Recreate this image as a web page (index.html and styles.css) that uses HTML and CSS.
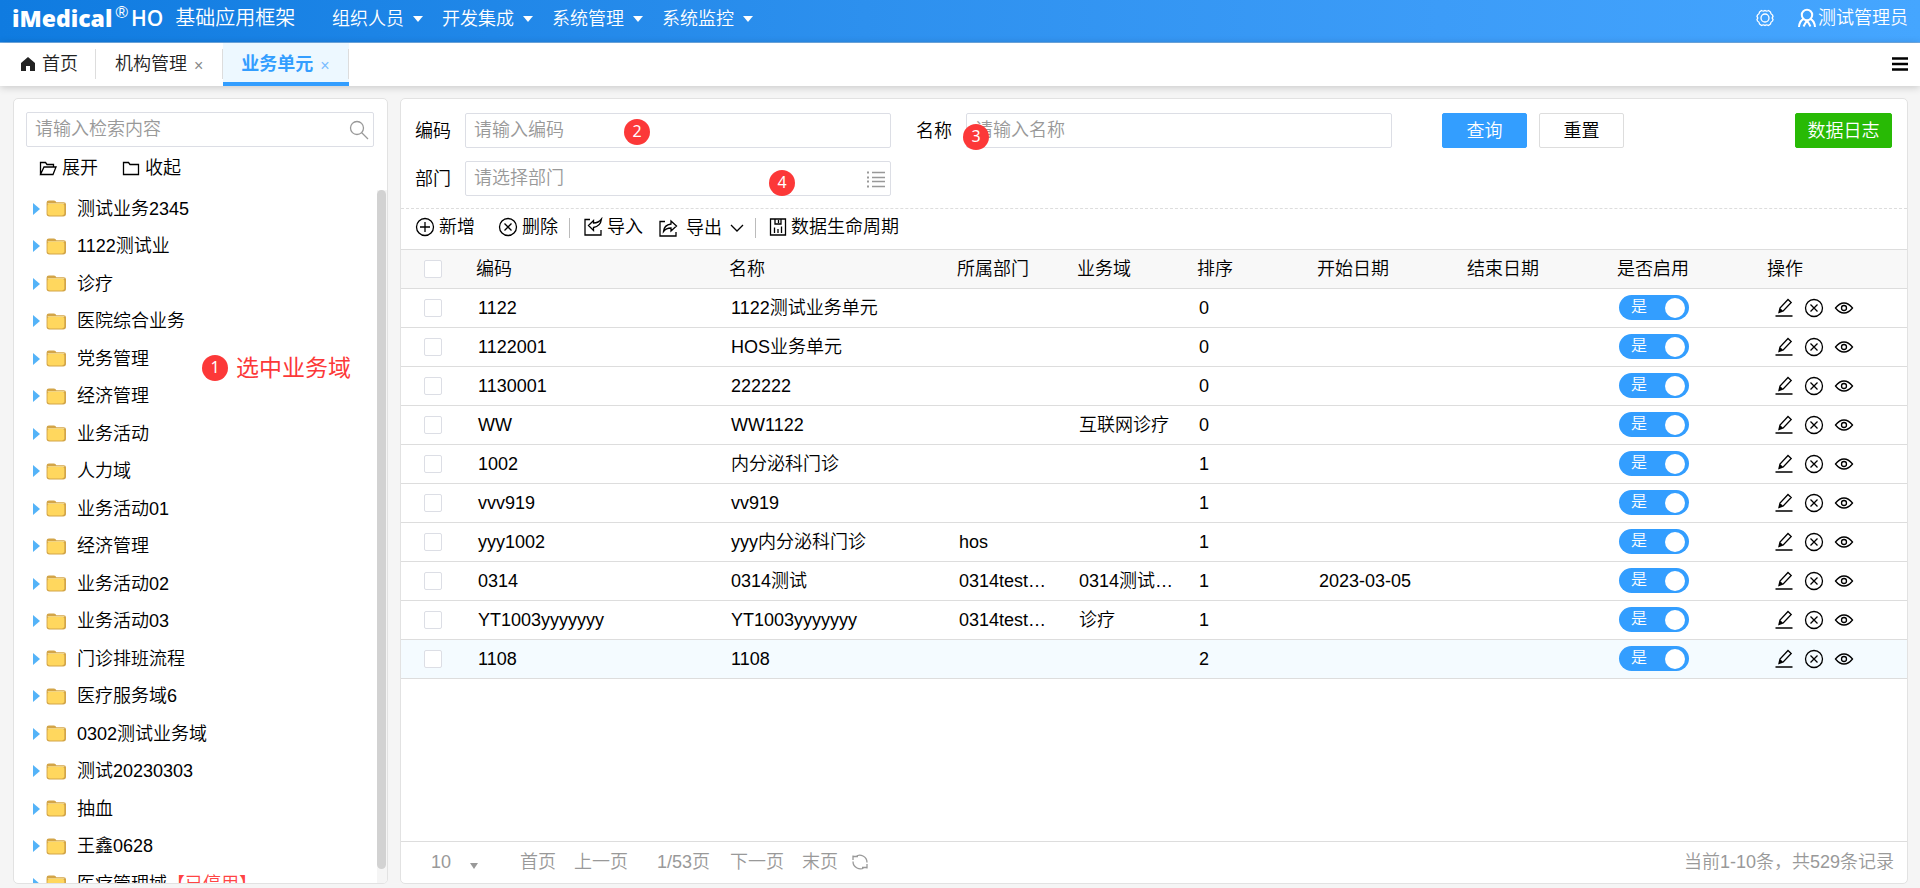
FILE: index.html
```
<!DOCTYPE html>
<html lang="zh-CN">
<head>
<meta charset="utf-8">
<title>iMedical HO 基础应用框架</title>
<link rel="stylesheet" href="styles.css">
</head>
<body>
<svg class="sprite" aria-hidden="true">
  <symbol id="i-folder" viewBox="1.500 1 17.500 16" preserveAspectRatio="none">
    <path d="M2 3.500Q2 1.500 4 1.500h4.500q1.500 0 2 1.500H17q2 0 2 2V14q0 2.500-2.500 2.500h-12Q2 16.500 2 14z" fill="#d3a548"/>
    <path d="M3 3.800h14.500v.8H3z" fill="#f3dfa6"/>
    <rect x="2.800" y="4.500" width="14.700" height="11" rx="2" fill="#ffd75e"/>
  </symbol>
  <symbol id="i-cross" viewBox="0 0 20 20"><circle cx="10" cy="10" r="8.500"/><path d="M6.500 6.500l7 7M13.500 6.500l-7 7"/></symbol>
  <symbol id="i-pen" viewBox="0 0 20 20"><path d="M1.500 18h17M5 14.500l1-4.500 8-8.500 3.200 3-8 8.500zM5.800 10.800l3 2.800M5 14.500l2-2"/></symbol>
  <symbol id="i-eye" viewBox="0 0 20 20"><path d="M1.500 10Q5.500 5 10 5t8.500 5Q14.500 15 10 15t-8.500-5z"/><circle cx="10" cy="10" r="2.500"/></symbol>
</svg>

<header class="topbar">
  <div class="brand"><strong class="brand-name">iMedical</strong><sup class="brand-mark">®</sup><span class="brand-ho">HO</span><span class="brand-title">基础应用框架</span></div>
  <nav class="menu">
    <button type="button">组织人员<i class="caret"></i></button>
    <button type="button">开发集成<i class="caret"></i></button>
    <button type="button">系统管理<i class="caret"></i></button>
    <button type="button">系统监控<i class="caret"></i></button>
  </nav>
  <div class="account">
    <button type="button" aria-label="设置"><svg class="icon i18" viewBox="0 0 18 18"><path d="M5.500 1.500q2 1.300 3.500 0 1.500 1.300 3.500 0l2 1.500q0 2 2 3l.5 1.500q-1.500 1.500 0 3L16.500 12q-2 .8-2 3l-2 1.500q-2-1.300-3.500 0-1.500-1.300-3.500 0l-2-1.500q0-2.200-2-3L1 10.500q1.500-1.500 0-3L1.500 6q2-1 2-3z"/><circle cx="9" cy="9" r="4"/></svg></button>
    <button type="button" class="user"><svg class="icon i20 thick" viewBox="0 0 20 20"><circle cx="10" cy="7" r="5.200"/><path d="M6.500 11q-4 2-4.500 8M13.500 11q4 2 4.500 8M6.500 18.500L9 14h2l2.500 4.500"/></svg>测试管理员</button>
  </div>
</header>

<nav class="tabs">
  <a class="tab home" href="#"><svg class="i14" viewBox="0 0 14 14"><path d="M7 0l7 6v8H9V9H5v5H0V6z" fill="#222"/></svg>首页</a>
  <a class="tab" href="#">机构管理<span class="close">×</span></a>
  <a class="tab active" href="#">业务单元<span class="close">×</span></a>
  <button type="button" class="tabs-menu" aria-label="更多"><svg class="i16" viewBox="0 0 16 14"><path d="M0 1.500h16M0 7h16M0 12.500h16" stroke="#000" stroke-width="2.500"/></svg></button>
</nav>

<main class="workspace">
  <aside class="panel side">
    <label class="search"><input type="text" placeholder="请输入检索内容" aria-label="检索"><svg class="icon i20 gray" viewBox="0 0 20 20"><circle cx="8" cy="8" r="6.500"/><path d="M12.500 12.500L19 19"/></svg></label>
    <div class="tree-tools">
      <button type="button"><svg class="icon i18" viewBox="0 0 18 18"><path d="M1.500 15.500v-12h5l1.500 2h6.500v2.500M1.500 15.500L5 8h12l-3 7.500z"/></svg>展开</button>
      <button type="button"><svg class="icon i18" viewBox="0 0 18 18"><path d="M1.500 15.500v-12h5l1.500 2h8.500v10z"/></svg>收起</button>
    </div>
    <div class="tree-wrap">
      <ul class="tree" id="tree"></ul>
      <div class="scroll"><div class="thumb"></div></div>
    </div>
  </aside>

  <section class="panel content">
    <form class="filters">
      <div class="field code"><label for="f1">编码</label><input id="f1" type="text" placeholder="请输入编码"></div>
      <div class="field name"><label for="f2">名称</label><input id="f2" type="text" placeholder="请输入名称"></div>
      <div class="actions"><button type="button" class="btn primary">查询</button><button type="button" class="btn">重置</button><button type="button" class="btn log">数据日志</button></div>
      <div class="field dept"><label for="f3">部门</label><div class="lookup"><input id="f3" type="text" placeholder="请选择部门"><svg class="icon i20 gray" viewBox="0 0 20 20"><path d="M6 3.500h13M6 8.500h13M6 12.500h13M6 17.500h13"/><path d="M1 3.500h2M1 8.500h2M1 12.500h2M1 17.500h2" stroke-width="2"/></svg></div></div>
    </form>
    <div class="toolbar">
      <button type="button"><svg class="icon i20" viewBox="0 0 20 20"><circle cx="10" cy="10" r="8.500"/><path d="M10 5v10M5 10h10"/></svg>新增</button>
      <button type="button" class="del"><svg class="icon i20"><use href="#i-cross"/></svg>删除</button>
      <i class="sep"></i>
      <button type="button"><svg class="icon i20" viewBox="0 0 20 20"><path d="M7 2.500H2v15.500h16v-5M5.500 8.500l5-5v2.500q5 0 8-4-1 7.500-8 8.500v3z"/></svg>导入</button>
      <button type="button" class="exp"><svg class="icon i20" viewBox="0 0 20 20"><path d="M7 3.500H2v14.500h16v-4M5.500 13.500Q6 7 13 6V3l5.500 5-5.500 5v-3q-5 0-7.500 3.500z"/></svg>导出<svg class="icon i14" viewBox="0 0 14 14"><path d="M1 4l6 6 6-6"/></svg></button>
      <i class="sep"></i>
      <button type="button"><svg class="icon i18" viewBox="0 0 18 18"><path d="M1.500 1h15v16h-15zM6 1v5h6V1M9.500 2v3M5.500 9.500V15M9 11v4M12.500 8.500V15"/></svg>数据生命周期</button>
    </div>
    <div class="grid">
      <table>
        <colgroup><col class="c-check"><col class="c-code"><col class="c-name"><col class="c-dept"><col class="c-dept"><col class="c-dept"><col class="c-date"><col class="c-date"><col class="c-date"><col></colgroup>
        <thead><tr><th><input type="checkbox" aria-label="全选"></th><th>编码</th><th>名称</th><th>所属部门</th><th>业务域</th><th>排序</th><th>开始日期</th><th>结束日期</th><th>是否启用</th><th>操作</th></tr></thead>
        <tbody id="rows"></tbody>
      </table>
    </div>
    <footer class="pager">
      <select aria-label="每页条数"><option>10</option></select><i class="caret"></i>
      <button type="button" class="first">首页</button>
      <button type="button" class="prev">上一页</button>
      <span class="page">1/53页</span>
      <button type="button" class="next">下一页</button>
      <button type="button" class="last">末页</button>
      <button type="button" class="reload" aria-label="刷新"><svg class="icon i18" viewBox="0 0 18 18"><path d="M2 7V2.500M2 3.500h5M5 3.500q3-2.500 7-.5 4 2 4 6.500M16 11v4.500M16 14.500h-5M13 14.500q-3 2.500-7 .5-4-2-4-6.500"/></svg></button>
      <span class="total">当前1-10条，共529条记录</span>
    </footer>
  </section>
</main>

<div class="note n1"><b>1</b><span>选中业务域</span></div>
<div class="note n2"><b>2</b></div>
<div class="note n3"><b>3</b></div>
<div class="note n4"><b>4</b></div>
<script src="app.js"></script>
</body>
</html>
```
FILE: styles.css
```
* { box-sizing: border-box; }
body {
  margin: 0;
  height: 100vh;
  display: flex;
  flex-direction: column;
  overflow: hidden;
  background: #f5f5f5;
  color: #000;
  font: 350 18px/24px "Liberation Sans", "Noto Sans CJK SC", sans-serif;
}
button, input, select { font: inherit; color: inherit; }
button { margin: 0; padding: 0; border: 0; background: none; display: flex; align-items: center; white-space: nowrap; }
a { color: inherit; text-decoration: none; }
.sprite { position: absolute; width: 0; height: 0; }
.icon { fill: none; stroke: currentColor; stroke-width: 1.3; flex: none; }
.icon.thick { stroke-width: 2; }
.gray { color: #999; }
.i14 { width: 14px; height: 14px; }
.i16 { width: 16px; height: 14px; }
.i18 { width: 18px; height: 18px; }
.i20 { width: 20px; height: 20px; }
.caret { width: 0; height: 0; border: 5px solid transparent; border-top: 6px solid currentColor; border-bottom: 0; }

.topbar {
  flex: none;
  height: 43px;
  padding: 0 12px;
  display: flex;
  color: #fff;
  background: linear-gradient(90deg, #0f7be0, #2d90ee 45%, #3c9cf8 75%, #45a6ff);
  border-bottom: 1px solid #72aee8;
}
.brand { width: 320px; display: flex; align-items: center; height: 36px; }
.brand-name { font: 800 23px/34px "Open Sans", sans-serif; }
.brand-mark { font-size: 17px; line-height: 20px; align-self: flex-start; margin: 3px 3px 0; }
.brand-ho { font: 600 21px/34px "Open Sans", sans-serif; }
.brand-title { font-size: 20px; margin-left: 12px; }
.menu { display: flex; height: 38px; }
.menu button { width: 110px; gap: 9px; }
.account { margin-left: auto; height: 36px; display: flex; gap: 23px; }
.account .user { gap: 1px; }

.tabs {
  flex: none;
  height: 43px;
  display: flex;
  background: #fff;
  color: #222;
  box-shadow: 0 1px 8px #0003;
}
.tab { display: flex; align-items: center; padding: 0 20px 2px 19px; position: relative; }
.tab::after { content: ""; position: absolute; right: 0; top: 6px; height: 30px; border-right: 1px solid #ddd; }
.tab.home { gap: 7px; padding: 0 18px 2px 21px; }
.close { margin-left: 7px; font-size: 16px; color: #888; padding-top: 4px; }
.tab.active { color: #339eff; background: #edf8ff; border-bottom: 4px solid #339eff; font-weight: 700; padding: 2px 19px 0 18px; }
.active .close { font-weight: 300; color: #79bdff; }
.tabs-menu { margin-left: auto; padding: 0 12px 2px; }

.workspace { flex: 1; min-height: 0; display: flex; gap: 12px; padding: 12px 12px 4px 13px; }
.panel { background: #fff; border: 1px solid #e2e2e2; border-radius: 5px; display: flex; flex-direction: column; overflow: hidden; min-width: 0; }
.side { width: 375px; flex: none; }
.content { flex: 1; }

input[type="text"] { width: 100%; height: 35px; padding: 0 8px; border: 1px solid #dcdee5; border-radius: 2px; background: #fff; }
input::placeholder { color: #999; opacity: 1; }
.search, .lookup { display: flex; align-items: center; flex: 1; }
.search { flex: none; margin: 13px 13px 0 12px; }
.search .icon, .lookup .icon { margin: 0 5px 0 -25px; }
.tree-tools { display: flex; gap: 24px; padding: 9px 0 0 25px; height: 43px; align-items: flex-start; }
.tree-tools button { gap: 5px; }
.tree-wrap { flex: 1; min-height: 0; display: flex; }
.tree { flex: 1; margin: 0; padding: 0 0 0 19px; list-style: none; overflow: hidden; }
.tree li { height: 37px; display: flex; align-items: center; white-space: nowrap; }
.tree li:nth-child(even) { height: 38px; }
.tree .arrow { width: 0; height: 0; border: 6px solid transparent; border-left: 7px solid #54b3f8; border-right: 0; margin-right: 6px; }
.tree svg { width: 20px; height: 17px; margin-right: 11px; }
.tree .off { color: #f44; }
.scroll { width: 10px; background: #f5f5f5; }
.thumb { width: 9px; height: 98%; border-radius: 5px; background: #d2d2d2; }

.filters {
  flex: none;
  display: grid;
  grid-template-columns: 476px 476px 1fr;
  column-gap: 25px;
  row-gap: 13px;
  padding: 14px 15px 12px 14px;
  border-bottom: 1px dashed #ddd;
}
.field { display: flex; align-items: center; gap: 14px; }
.field label { flex: none; }
.actions { display: flex; gap: 12px; padding-left: 25px; }
.btn { width: 85px; height: 35px; justify-content: center; border: 1px solid #ddd; border-radius: 2px; }
.btn.primary { color: #fff; background: #339eff; border-color: #339eff; }
.btn.log { width: 97px; margin-left: auto; color: #fff; background: #28ba05; border-color: #28ba05; }

.toolbar { flex: none; height: 40px; display: flex; align-items: center; padding: 0 14px 4px; }
.toolbar button { gap: 4px; }
.toolbar .del { margin-left: 23px; }
.toolbar .sep { height: 20px; width: 1px; background: #bbb; margin: 2px 13px 0 11px; }
.toolbar .exp { margin-left: 15px; gap: 8px; padding-top: 2px; }

.grid { flex: 1; min-height: 0; border-top: 1px solid #ddd; }
table { width: 100%; table-layout: fixed; border-collapse: separate; border-spacing: 0; }
.c-check { width: 65px; } .c-code { width: 253px; } .c-name { width: 228px; } .c-dept { width: 120px; } .c-date { width: 150px; }
th, td { height: 39px; padding: 0 11px 1px 12px; border-bottom: 1px solid #ddd; text-align: left; font-weight: inherit; white-space: nowrap; overflow: hidden; text-overflow: ellipsis; }
th { padding: 0 10px; background: #f8f8f8; }
th:first-child, td:first-child { padding: 0 0 0 23px; }
tbody tr:last-child { background: #f4fbff; }
th input, td > input { appearance: none; display: block; width: 18px; height: 18px; margin: 0; border: 1px solid #dcdee5; border-radius: 2px; background: #fff; }
.switch { display: block; position: relative; width: 70px; height: 25px; border-radius: 13px; background: #339eff; color: #fff; font-size: 16px; padding-left: 12px; }
.switch input { appearance: none; position: absolute; right: 4px; top: 3px; margin: 0; width: 20px; height: 20px; border-radius: 50%; background: #fff; }
.ops { display: flex; gap: 10px; padding-left: 5px; }

.pager { flex: none; height: 42px; display: flex; align-items: center; color: #999; border-top: 1px solid #ddd; padding: 0 13px 2px 30px; }
.pager select { appearance: none; border: 0; background: none; padding: 0; width: 39px; }
.pager .caret { margin-top: 8px; border-width: 6px 4px 0; }
.first { margin-left: 42px; } .prev { margin-left: 18px; } .page { margin-left: 29px; } .next { margin-left: 20px; } .last { margin-left: 18px; } .reload { margin-left: 13px; }
.total { margin-left: auto; }

.note { position: absolute; display: flex; align-items: center; gap: 8px; color: #fc3838; font-size: 23px; font-weight: 400; line-height: 30px; }
.note b { width: 26px; height: 26px; border-radius: 50%; background: #fc3838; color: #fff; font: 400 16px/25px "Noto Sans", sans-serif; text-align: center; }
.n1 { left: 202px; top: 353px; }
.n2 { left: 624px; top: 119px; }
.n3 { left: 963px; top: 124px; }
.n4 { left: 769px; top: 170px; }
```
FILE: app.js
```
const nodes = ['测试业务2345', '1122测试业', '诊疗', '医院综合业务', '党务管理', '经济管理', '业务活动', '人力域', '业务活动01', '经济管理', '业务活动02', '业务活动03', '门诊排班流程', '医疗服务域6', '0302测试业务域', '测试20230303', '抽血', '王鑫0628', '医疗管理域<span class="off">【已停用】</span>'];
document.getElementById('tree').innerHTML = nodes.map(n => `<li><i class="arrow"></i><svg><use href="#i-folder"/></svg><span>${n}</span></li>`).join('');

const rows = [
  ['1122', '1122测试业务单元', '', '', '0', ''],
  ['1122001', 'HOS业务单元', '', '', '0', ''],
  ['1130001', '222222', '', '', '0', ''],
  ['WW', 'WW1122', '', '互联网诊疗', '0', ''],
  ['1002', '内分泌科门诊', '', '', '1', ''],
  ['vvv919', 'vv919', '', '', '1', ''],
  ['yyy1002', 'yyy内分泌科门诊', 'hos', '', '1', ''],
  ['0314', '0314测试', '0314test…', '0314测试…', '1', '2023-03-05'],
  ['YT1003yyyyyyy', 'YT1003yyyyyyy', '0314test…', '诊疗', '1', ''],
  ['1108', '1108', '', '', '2', '']
];
const op = (id, label) => `<button type="button" aria-label="${label}"><svg class="icon i20"><use href="#${id}"/></svg></button>`;
document.getElementById('rows').innerHTML = rows.map(r => `<tr><td><input type="checkbox" aria-label="选择"></td>${r.map(c => `<td>${c}</td>`).join('')}<td></td><td><label class="switch">是<input type="checkbox" checked></label></td><td><div class="ops">${op('i-pen', '编辑')}${op('i-cross', '删除')}${op('i-eye', '查看')}</div></td></tr>`).join('');
```
